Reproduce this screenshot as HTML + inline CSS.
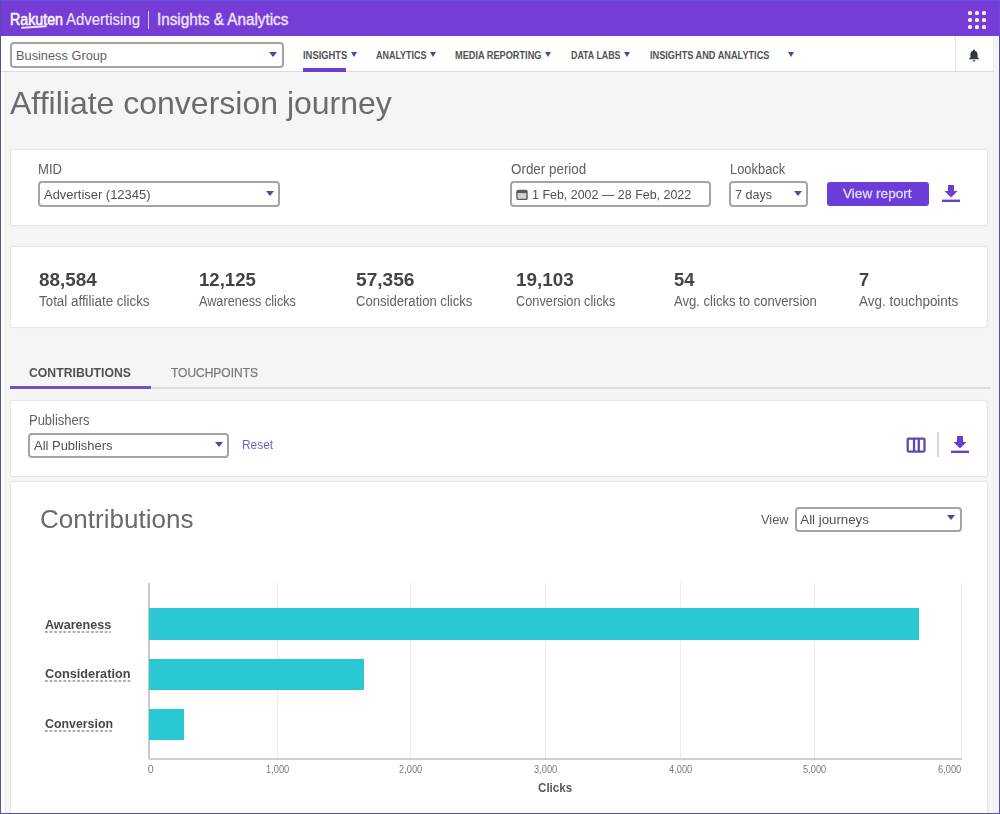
<!DOCTYPE html>
<html><head><meta charset="utf-8"><style>
html,body{margin:0;padding:0}
body{width:1000px;height:814px;overflow:hidden;position:relative;background:#f5f5f5;font-family:"Liberation Sans",sans-serif}
.t{position:absolute;line-height:1;white-space:nowrap;transform-origin:0 0}
.b{position:absolute}
</style></head><body><div id="root" style="position:absolute;left:0;top:0;width:1000px;height:814px;filter:blur(0.4px)">
<div class="b" style="left:0px;top:0px;width:1000px;height:36px;background:#743dd6"></div>
<div class="b" style="left:1px;top:36px;width:992px;height:36px;background:#fff;border-bottom:1px solid #dcdcdc;box-sizing:border-box"></div>
<div class="b" style="left:993px;top:36px;width:6px;height:778px;background:#f3f4fb;border-left:1.5px solid #e8eddc;box-sizing:border-box"></div>
<div class="b" style="left:1px;top:72px;width:5px;height:742px;background:#fdfdfb;border-right:1px solid #e6e6e6;box-sizing:border-box"></div>
<div class="t " style="left:10.00px;top:11.45px;font-size:16.48px;color:#fbf4ff;transform:scaleX(0.8634);-webkit-text-stroke:0.6px #fbf4ff;">Rakuten</div>
<div class="b" style="left:21px;top:26px;width:26px;height:2px;background:#f0e0ff;border-radius:2px;transform:rotate(-4deg)"></div>
<div class="t " style="left:66.00px;top:11.45px;font-size:16.48px;color:#efe4ff;transform:scaleX(0.9077);-webkit-text-stroke:0.2px #efe4ff;">Advertising</div>
<div class="b" style="left:148px;top:11px;width:1.3000000000000114px;height:18px;background:#d9c8ff"></div>
<div class="t " style="left:156.50px;top:12.12px;font-size:15.92px;color:#efe2ff;transform:scaleX(0.9586);-webkit-text-stroke:0.4px #efe2ff;">Insights &amp; Analytics</div>
<div class="b" style="left:968px;top:11px;width:4px;height:4px;background:#fbeeff;border-radius:1.6px"></div>
<div class="b" style="left:968px;top:18px;width:4px;height:4px;background:#fbeeff;border-radius:1.6px"></div>
<div class="b" style="left:968px;top:25px;width:4px;height:4px;background:#fbeeff;border-radius:1.6px"></div>
<div class="b" style="left:975px;top:11px;width:4px;height:4px;background:#fbeeff;border-radius:1.6px"></div>
<div class="b" style="left:975px;top:18px;width:4px;height:4px;background:#fbeeff;border-radius:1.6px"></div>
<div class="b" style="left:975px;top:25px;width:4px;height:4px;background:#fbeeff;border-radius:1.6px"></div>
<div class="b" style="left:982px;top:11px;width:4px;height:4px;background:#fbeeff;border-radius:1.6px"></div>
<div class="b" style="left:982px;top:18px;width:4px;height:4px;background:#fbeeff;border-radius:1.6px"></div>
<div class="b" style="left:982px;top:25px;width:4px;height:4px;background:#fbeeff;border-radius:1.6px"></div>
<div class="b" style="left:9.6px;top:42px;width:274.4px;height:26px;border:2px solid #a4a4a4;border-radius:4px;box-sizing:border-box;background:#fff"></div>
<div class="t " style="left:16.00px;top:49.00px;font-size:12.99px;color:#5f5f5f;transform:scaleX(0.9847);">Business Group</div>
<div class="b" style="left:269.0px;top:51.8px;width:0;height:0;border-left:4.0px solid transparent;border-right:4.0px solid transparent;border-top:5.5px solid #55449e"></div>
<div class="t " style="left:302.60px;top:49.51px;font-size:10.61px;color:#525252;font-weight:bold;transform:scaleX(0.8857);">INSIGHTS</div>
<div class="b" style="left:350.6px;top:52.0px;width:0;height:0;border-left:3.0px solid transparent;border-right:3.0px solid transparent;border-top:5px solid #55449e"></div>
<div class="t " style="left:376.00px;top:49.51px;font-size:10.61px;color:#525252;font-weight:bold;transform:scaleX(0.8466);">ANALYTICS</div>
<div class="b" style="left:430.0px;top:52.0px;width:0;height:0;border-left:3.0px solid transparent;border-right:3.0px solid transparent;border-top:5px solid #55449e"></div>
<div class="t " style="left:455.00px;top:49.51px;font-size:10.61px;color:#525252;font-weight:bold;transform:scaleX(0.8662);">MEDIA REPORTING</div>
<div class="b" style="left:545.0px;top:52.0px;width:0;height:0;border-left:3.0px solid transparent;border-right:3.0px solid transparent;border-top:5px solid #55449e"></div>
<div class="t " style="left:570.50px;top:49.51px;font-size:10.61px;color:#525252;font-weight:bold;transform:scaleX(0.8340);">DATA LABS</div>
<div class="b" style="left:624.0px;top:52.0px;width:0;height:0;border-left:3.0px solid transparent;border-right:3.0px solid transparent;border-top:5px solid #55449e"></div>
<div class="t " style="left:650.00px;top:49.51px;font-size:10.61px;color:#525252;font-weight:bold;transform:scaleX(0.8659);">INSIGHTS AND ANALYTICS</div>
<div class="b" style="left:788.0px;top:52.0px;width:0;height:0;border-left:3.0px solid transparent;border-right:3.0px solid transparent;border-top:5px solid #55449e"></div>
<div class="b" style="left:303px;top:68px;width:43px;height:4px;background:#6a3ed0"></div>
<div class="b" style="left:955px;top:36px;width:1px;height:35px;background:#e2e2e2"></div>
<svg class="b" style="left:967.8px;top:48px" width="12" height="14" viewBox="0 0 14 16"><path d="M7 1.5c.7 0 1.1.5 1.1 1v.4c2 .5 3.1 2.2 3.1 4.3v3.3l1.6 1.8v.8H1.2v-.8l1.6-1.8V7.2c0-2.1 1.1-3.8 3.1-4.3v-.4c0-.5.4-1 1.1-1z M5.4 14h3.2c0 .9-.7 1.6-1.6 1.6S5.4 14.9 5.4 14z" fill="#333a3f"/></svg>
<div class="t " style="left:10.00px;top:86.81px;font-size:32.00px;color:#686c71;">Affiliate conversion journey</div>
<div class="b" style="left:11px;top:150px;width:976px;height:75px;background:#fff;box-shadow:0 0 0 1px rgba(0,0,0,.03),0 0 2px 1px rgba(0,0,0,.04);border-radius:2px"></div>
<div class="t " style="left:38.00px;top:162.88px;font-size:13.97px;color:#606060;transform:scaleX(0.9375);">MID</div>
<div class="b" style="left:37.5px;top:181px;width:242.5px;height:26px;border:2px solid #a4a4a4;border-radius:4px;box-sizing:border-box"></div>
<div class="t " style="left:43.50px;top:187.77px;font-size:13.27px;color:#505050;transform:scaleX(0.9757);">Advertiser (12345)</div>
<div class="b" style="left:266.0px;top:190.8px;width:0;height:0;border-left:4.0px solid transparent;border-right:4.0px solid transparent;border-top:5.5px solid #55449e"></div>
<div class="t " style="left:510.50px;top:163.38px;font-size:13.97px;color:#606060;transform:scaleX(0.9597);">Order period</div>
<div class="b" style="left:509.5px;top:181px;width:201.25px;height:26px;border:2px solid #a4a4a4;border-radius:4px;box-sizing:border-box"></div>
<svg class="b" style="left:515.5px;top:189px" width="12" height="11" viewBox="0 0 12 11"><rect x="1" y="1.5" width="10" height="9" rx="1.3" fill="#d2d2d2" stroke="#5a5a5a" stroke-width="1.4"/><rect x="1" y="1.5" width="10" height="2.6" fill="#5a5a5a"/></svg>
<div class="t " style="left:532.00px;top:187.52px;font-size:13.27px;color:#505050;transform:scaleX(0.9387);">1 Feb, 2002 — 28 Feb, 2022</div>
<div class="t " style="left:729.80px;top:162.98px;font-size:13.97px;color:#606060;transform:scaleX(0.9233);">Lookback</div>
<div class="b" style="left:729px;top:181px;width:78.5px;height:26px;border:2px solid #a4a4a4;border-radius:4px;box-sizing:border-box"></div>
<div class="t " style="left:735.40px;top:187.57px;font-size:13.27px;color:#505050;transform:scaleX(0.9465);">7 days</div>
<div class="b" style="left:793.8px;top:190.8px;width:0;height:0;border-left:4.0px solid transparent;border-right:4.0px solid transparent;border-top:5.5px solid #55449e"></div>
<div class="b" style="left:826.6px;top:181.6px;width:102.19999999999993px;height:24.200000000000017px;background:#6b3edb;border-radius:3px"></div>
<div class="t " style="left:843.20px;top:186.65px;font-size:13.41px;color:#e4d8ff;transform:scaleX(1.0152);-webkit-text-stroke:0.3px #e4d8ff;">View report</div>
<svg class="b" style="left:941px;top:184.5px" width="20" height="17" viewBox="0 0 20 17"><path d="M7 0h6v6h3.6L10 12.6 3.4 6H7z" fill="#6a3fcf"/><rect x="1" y="14.6" width="18" height="2.4" fill="#6a3fcf"/></svg>
<div class="b" style="left:11px;top:247px;width:976px;height:79.5px;background:#fff;box-shadow:0 0 0 1px rgba(0,0,0,.03),0 0 2px 1px rgba(0,0,0,.04);border-radius:2px"></div>
<div class="t " style="left:39.10px;top:270.65px;font-size:18.02px;color:#444444;font-weight:bold;transform:scaleX(1.0489);">88,584</div>
<div class="t " style="left:39.10px;top:293.54px;font-size:14.25px;color:#616161;transform:scaleX(0.9387);">Total affiliate clicks</div>
<div class="t " style="left:198.90px;top:270.65px;font-size:18.02px;color:#444444;font-weight:bold;transform:scaleX(1.0307);">12,125</div>
<div class="t " style="left:198.90px;top:293.54px;font-size:14.25px;color:#616161;transform:scaleX(0.8890);">Awareness clicks</div>
<div class="t " style="left:356.30px;top:270.65px;font-size:18.02px;color:#444444;font-weight:bold;transform:scaleX(1.0616);">57,356</div>
<div class="t " style="left:356.30px;top:293.54px;font-size:14.25px;color:#616161;transform:scaleX(0.9180);">Consideration clicks</div>
<div class="t " style="left:516.10px;top:270.65px;font-size:18.02px;color:#444444;font-weight:bold;transform:scaleX(1.0489);">19,103</div>
<div class="t " style="left:516.10px;top:293.54px;font-size:14.25px;color:#616161;transform:scaleX(0.8959);">Conversion clicks</div>
<div class="t " style="left:674.30px;top:270.65px;font-size:18.02px;color:#444444;font-weight:bold;transform:scaleX(1.0179);">54</div>
<div class="t " style="left:674.30px;top:293.54px;font-size:14.25px;color:#616161;transform:scaleX(0.9170);">Avg. clicks to conversion</div>
<div class="t " style="left:858.90px;top:270.65px;font-size:18.02px;color:#444444;font-weight:bold;transform:scaleX(1.0079);">7</div>
<div class="t " style="left:858.90px;top:293.54px;font-size:14.25px;color:#616161;transform:scaleX(0.9451);">Avg. touchpoints</div>
<div class="t " style="left:29.10px;top:366.66px;font-size:12.57px;color:#515151;font-weight:bold;transform:scaleX(0.9738);">CONTRIBUTIONS</div>
<div class="t " style="left:171.00px;top:366.66px;font-size:12.57px;color:#7a7a7a;transform:scaleX(0.9534);-webkit-text-stroke:0.25px #7a7a7a;">TOUCHPOINTS</div>
<div class="b" style="left:150px;top:387px;width:841px;height:1.5px;background:#dedede"></div>
<div class="b" style="left:10px;top:385.5px;width:140.6px;height:3.0px;background:#7150d0"></div>
<div class="b" style="left:11px;top:401px;width:976px;height:74.5px;background:#fff;box-shadow:0 0 0 1px rgba(0,0,0,.03),0 0 2px 1px rgba(0,0,0,.04);border-radius:2px"></div>
<div class="t " style="left:29.00px;top:413.88px;font-size:13.97px;color:#606060;transform:scaleX(0.9278);">Publishers</div>
<div class="b" style="left:28.2px;top:432.5px;width:200.8px;height:25.80000000000001px;border:2px solid #a4a4a4;border-radius:4px;box-sizing:border-box"></div>
<div class="t " style="left:34.00px;top:438.77px;font-size:13.27px;color:#505050;transform:scaleX(0.9766);">All Publishers</div>
<div class="b" style="left:214.7px;top:441.8px;width:0;height:0;border-left:4.0px solid transparent;border-right:4.0px solid transparent;border-top:5.5px solid #55449e"></div>
<div class="t " style="left:241.80px;top:438.07px;font-size:13.27px;color:#7560c2;transform:scaleX(0.9001);">Reset</div>
<svg class="b" style="left:905px;top:435.5px" width="22" height="18" viewBox="0 0 22 18"><rect x="2.7" y="2.6" width="16.8" height="13" rx="1" fill="none" stroke="#5e48b4" stroke-width="2.3"/><rect x="7.9" y="2" width="2.3" height="14" fill="#5e48b4"/><rect x="12.6" y="2" width="2.3" height="14" fill="#5e48b4"/></svg>
<div class="b" style="left:937.2px;top:432px;width:2.0px;height:24.5px;background:#d8d8d8"></div>
<svg class="b" style="left:950px;top:436px" width="20" height="17" viewBox="0 0 20 17"><path d="M7 0h6v6h3.6L10 12.6 3.4 6H7z" fill="#6a3fcf"/><rect x="1" y="14.6" width="18" height="2.4" fill="#6a3fcf"/></svg>
<div class="b" style="left:11px;top:482px;width:976px;height:338px;background:#fff;box-shadow:0 0 0 1px rgba(0,0,0,.03),0 0 2px 1px rgba(0,0,0,.04);border-radius:2px"></div>
<div class="t " style="left:39.50px;top:506.62px;font-size:25.49px;color:#6b6b6b;transform:scaleX(1.0221);">Contributions</div>
<div class="t " style="left:761.30px;top:513.01px;font-size:13.69px;color:#5a5a5a;transform:scaleX(0.9381);">View</div>
<div class="b" style="left:795px;top:506.5px;width:166.5px;height:25.0px;border:2px solid #a4a4a4;border-radius:4px;box-sizing:border-box"></div>
<div class="t " style="left:800.30px;top:512.77px;font-size:13.27px;color:#505050;">All journeys</div>
<div class="b" style="left:947.0px;top:515.2px;width:0;height:0;border-left:4.0px solid transparent;border-right:4.0px solid transparent;border-top:5.5px solid #55449e"></div>
<div class="b" style="left:277.2px;top:583px;width:1.0px;height:175px;background:#ebebeb"></div>
<div class="b" style="left:410.0px;top:583px;width:1.0px;height:175px;background:#ebebeb"></div>
<div class="b" style="left:544.8px;top:583px;width:1.0px;height:175px;background:#ebebeb"></div>
<div class="b" style="left:680.0px;top:583px;width:1.0px;height:175px;background:#ebebeb"></div>
<div class="b" style="left:814.2px;top:583px;width:1.0px;height:175px;background:#ebebeb"></div>
<div class="b" style="left:960.5px;top:583px;width:1.0px;height:175px;background:#ebebeb"></div>
<div class="b" style="left:148.3px;top:583px;width:1.5px;height:176px;background:#c9c9c9"></div>
<div class="b" style="left:149px;top:758px;width:812.5px;height:2px;background:#cfcfcf"></div>
<div class="b" style="left:149px;top:608px;width:770.2px;height:31.5px;background:#2ac8d2"></div>
<div class="b" style="left:149px;top:658.5px;width:215px;height:31.0px;background:#2ac8d2"></div>
<div class="b" style="left:149px;top:708.5px;width:34.69999999999999px;height:31.0px;background:#2ac8d2"></div>
<div class="t " style="left:45.00px;top:617.65px;font-size:13.41px;color:#474747;font-weight:bold;transform:scaleX(0.9382);">Awareness</div>
<div class="b" style="left:45px;top:631px;width:66.2px;height:1.5px;background-image:linear-gradient(90deg,#9a9a9a 50%,transparent 50%);background-size:4.6px 100%;opacity:.8"></div>
<div class="t " style="left:45.00px;top:667.05px;font-size:13.41px;color:#474747;font-weight:bold;transform:scaleX(0.9485);">Consideration</div>
<div class="b" style="left:45px;top:680.4px;width:85.5px;height:1.5px;background-image:linear-gradient(90deg,#9a9a9a 50%,transparent 50%);background-size:4.6px 100%;opacity:.8"></div>
<div class="t " style="left:45.00px;top:716.85px;font-size:13.41px;color:#474747;font-weight:bold;transform:scaleX(0.9219);">Conversion</div>
<div class="b" style="left:45px;top:730.2px;width:68px;height:1.5px;background-image:linear-gradient(90deg,#9a9a9a 50%,transparent 50%);background-size:4.6px 100%;opacity:.8"></div>
<div class="t " style="left:147.65px;top:764.21px;font-size:10.61px;color:#7a7a7a;">0</div>
<div class="t " style="left:266.10px;top:764.21px;font-size:10.61px;color:#7a7a7a;transform:scaleX(0.8734);">1,000</div>
<div class="t " style="left:398.90px;top:764.21px;font-size:10.61px;color:#7a7a7a;transform:scaleX(0.8734);">2,000</div>
<div class="t " style="left:533.70px;top:764.21px;font-size:10.61px;color:#7a7a7a;transform:scaleX(0.8734);">3,000</div>
<div class="t " style="left:668.90px;top:764.21px;font-size:10.61px;color:#7a7a7a;transform:scaleX(0.8734);">4,000</div>
<div class="t " style="left:803.10px;top:764.21px;font-size:10.61px;color:#7a7a7a;transform:scaleX(0.8734);">5,000</div>
<div class="t " style="left:937.80px;top:764.21px;font-size:10.61px;color:#7a7a7a;transform:scaleX(0.8734);">6,000</div>
<div class="t " style="left:537.80px;top:780.85px;font-size:13.41px;color:#5a5a5a;font-weight:bold;transform:scaleX(0.8657);">Clicks</div>
</div><div class="b" style="left:0;top:0;width:1000px;height:814px;border:1px solid #57519d;border-top-color:#6651e3;box-sizing:border-box;z-index:50"></div><div class="b" style="left:999px;top:1px;width:1px;height:34px;background:#6b49dc;z-index:51"></div></body></html>
